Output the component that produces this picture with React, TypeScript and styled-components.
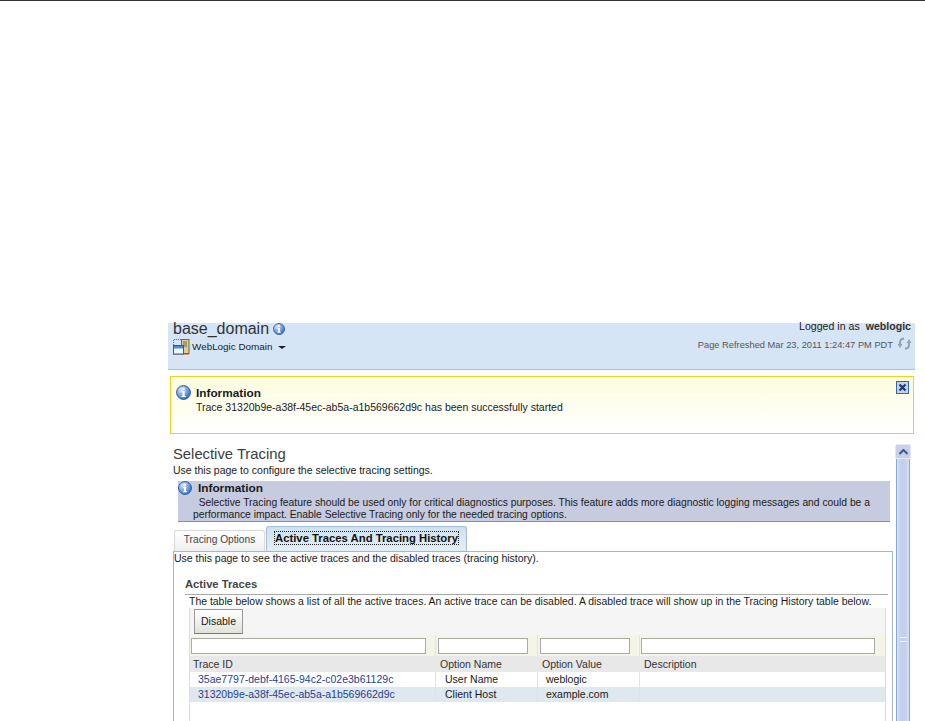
import React, { FC } from "react";
import styled, { createGlobalStyle } from "styled-components";

const COLUMNS = "246px 102px 102px 245px";

interface iRow {
  id: string;
  name: string;
  value: string;
  alt?: boolean;
}

const rows: iRow[] = [
  { id: "35ae7797-debf-4165-94c2-c02e3b61129c", name: "User Name", value: "weblogic" },
  { id: "31320b9e-a38f-45ec-ab5a-a1b569662d9c", name: "Client Host", value: "example.com", alt: true },
];

const InfoIcon: FC<{ size: number }> = ({ size }) => (
  <svg width={size} height={size} viewBox="0 0 16 16">
    <defs>
      <radialGradient id="infoFill" cx="35%" cy="30%" r="80%">
        <stop offset="0%" stopColor="#dbe9fb" />
        <stop offset="55%" stopColor="#6f9fe0" />
        <stop offset="100%" stopColor="#2b5fb5" />
      </radialGradient>
    </defs>
    <circle cx="8" cy="8" r="7.4" fill="url(#infoFill)" stroke="#2a55a0" />
    <rect x="6.8" y="3" width="2.4" height="2.2" fill="#fff" />
    <path d="M6 6.5h3.2v5.2H10.4v1.2H5.8v-1.2h1.1V7.7H6z" fill="#fff" />
  </svg>
);

const DomainIcon = () => (
  <svg width="17" height="16" viewBox="0 0 17 16">
    <path d="M0.5 6V0.5H9" fill="none" stroke="#d9462a" strokeDasharray="1 1" />
    <path d="M0.5 15.5H15.5" fill="none" stroke="#d9462a" strokeDasharray="1 1" />
    <rect x="8.5" y="0.5" width="7.5" height="14" fill="#d9cf94" stroke="#6f6a3c" />
    <path d="M10 3h4M10 5h4M10 7h4" stroke="#6f6a3c" />
    <rect x="0.5" y="6.5" width="10" height="8.5" fill="#f3f7fd" stroke="#2a5c9e" />
    <rect x="1" y="7" width="9" height="2.5" fill="#4f8ad0" />
  </svg>
);

const RefreshIcon = () => (
  <svg width="13" height="13" viewBox="0 0 13 13" fill="none" stroke="#8f9bab" strokeWidth="1.8">
    <path d="M6 1.5C3.4 1.5 2 3.4 2 5.6V8" />
    <path d="M7 11.5c2.6 0 4-1.9 4-4.1V5" />
    <path d="M0.2 7l1.8 3 1.8-3M9.2 6l1.8-3 1.8 3" strokeWidth="1.1" />
  </svg>
);

const CloseIcon = () => (
  <svg width="13" height="13" viewBox="0 0 13 13">
    <rect x="0.5" y="0.5" width="12" height="12" fill="#c3d3ec" stroke="#3a64a8" />
    <path d="M3.5 3.5l6 6M9.5 3.5l-6 6" stroke="#1c3a72" strokeWidth="2.2" />
  </svg>
);

const App = () => {
  return (
    <Page>
      <GlobalStyle />
      <Frame>
        <Header>
          <HeaderLeft>
            <DomainTitle>
              base_domain
              <InfoIcon size={12} />
            </DomainTitle>
            <DomainMenu>
              <DomainIcon />
              <DomainLabel>WebLogic Domain</DomainLabel>
              <Caret />
            </DomainMenu>
          </HeaderLeft>
          <HeaderRight>
            <LoggedIn>
              Logged in as <b>weblogic</b>
            </LoggedIn>
            <Refreshed>
              Page Refreshed Mar 23, 2011 1:24:47 PM PDT
              <RefreshIcon />
            </Refreshed>
          </HeaderRight>
        </Header>

        <Banner>
          <InfoIcon size={15} />
          <BannerText>
            <BannerTitle>Information</BannerTitle>
            <div>Trace 31320b9e-a38f-45ec-ab5a-a1b569662d9c has been successfully started</div>
          </BannerText>
          <CloseButton>
            <CloseIcon />
          </CloseButton>
        </Banner>

        <Body>
          <Main>
            <PageTitle>Selective Tracing</PageTitle>
            <Intro>Use this page to configure the selective tracing settings.</Intro>
            <Notice>
              <NoticeHead>
                <InfoIcon size={14} />
                <BannerTitle>Information</BannerTitle>
              </NoticeHead>
              <NoticeText>
                &nbsp;&nbsp;Selective Tracing feature should be used only for critical diagnostics purposes. This feature adds more diagnostic logging messages and could be a
                <br />
                performance impact. Enable Selective Tracing only for the needed tracing options.
              </NoticeText>
            </Notice>

            <Tabs>
              <Tab>Tracing Options</Tab>
              <Tab $active>
                <TabLabel>Active Traces And Tracing History</TabLabel>
              </Tab>
            </Tabs>

            <Panel>
              <PanelIntro>Use this page to see the active traces and the disabled traces (tracing history).</PanelIntro>
              <Section>
                <SectionTitle>Active Traces</SectionTitle>
                <SectionIntro>
                  The table below shows a list of all the active traces. An active trace can be disabled. A disabled trace will show up in the Tracing History table below.
                </SectionIntro>
                <TableBox>
                  <Toolbar>
                    <DisableButton>Disable</DisableButton>
                  </Toolbar>
                  <FilterRow>
                    <FilterCell><FilterInput /></FilterCell>
                    <FilterCell><FilterInput /></FilterCell>
                    <FilterCell><FilterInput /></FilterCell>
                    <FilterCell><FilterInput /></FilterCell>
                  </FilterRow>
                  <HeadRow>
                    <HeadCell>Trace ID</HeadCell>
                    <HeadCell>Option Name</HeadCell>
                    <HeadCell>Option Value</HeadCell>
                    <HeadCell>Description</HeadCell>
                  </HeadRow>
                  {rows.map((row) => (
                    <DataRow key={row.id} $alt={row.alt}>
                      <TraceCell>{row.id}</TraceCell>
                      <DataCell>{row.name}</DataCell>
                      <DataCell>{row.value}</DataCell>
                      <DataCell />
                    </DataRow>
                  ))}
                </TableBox>
              </Section>
            </Panel>
          </Main>

          <Scrollbar>
            <ScrollButton>
              <svg width="9" height="6" viewBox="0 0 9 6">
                <path d="M0.5 5L4.5 1l4 4" fill="none" stroke="#3f5a8a" strokeWidth="2" />
              </svg>
            </ScrollButton>
            <ScrollThumb>
              <Grip />
            </ScrollThumb>
          </Scrollbar>
        </Body>
      </Frame>
    </Page>
  );
};

export default App;

const GlobalStyle = createGlobalStyle`
  body {
    margin: 0;
    background: #fff;
    font-family: "Liberation Sans", Arial, sans-serif;
    font-size: 10.5px;
    color: #1a1a1a;
  }
`;

const Page = styled.div`
  height: 721px;
  overflow: hidden;
  border-top: 1px solid #333;
  box-sizing: border-box;
  padding: 322px 10px 0 168px;
`;

const Frame = styled.div`
  display: flex;
  flex-direction: column;
`;

const Header = styled.div`
  height: 47px;
  box-sizing: border-box;
  background: #d6e5f6;
  border-bottom: 1px solid #a9c0dc;
  display: flex;
  justify-content: space-between;
  padding: 0 4px 0 5px;
`;

const HeaderLeft = styled.div`
  display: flex;
  flex-direction: column;
`;

const DomainTitle = styled.div`
  display: flex;
  align-items: center;
  gap: 4px;
  font-size: 16px;
  line-height: 12px;
  color: #333;
  height: 12px;
`;

const DomainMenu = styled.div`
  display: flex;
  align-items: center;
  gap: 2px;
  margin-top: 4px;
  font-size: 9.9px;
`;

const DomainLabel = styled.span`
  margin-bottom: 2px;
`;

const Caret = styled.span`
  margin: 1px 0 0 3px;
  border-left: 4px solid transparent;
  border-right: 4px solid transparent;
  border-top: 3px solid #222;
`;

const HeaderRight = styled.div`
  display: flex;
  flex-direction: column;
  align-items: flex-end;
`;

const LoggedIn = styled.div`
  height: 7px;
  line-height: 7px;
  font-size: 10.6px;

  b {
    margin-left: 3px;
    color: #333;
  }
`;

const Refreshed = styled.div`
  display: flex;
  align-items: center;
  gap: 5px;
  margin-top: 10px;
  font-size: 9.3px;
  color: #555;

  svg {
    margin-top: -3px;
  }
`;

const Banner = styled.div`
  margin: 6px 1px 0 2px;
  height: 58px;
  box-sizing: border-box;
  border: 1px solid #f0d020;
  background: linear-gradient(#fdfddf, #fff);
  display: flex;
  padding: 8px 4px 0 5px;
  gap: 5px;
`;

const BannerText = styled.div`
  flex: 1;
  line-height: 14px;
  margin-top: 1px;
  font-size: 10.5px;
`;

const BannerTitle = styled.div`
  font-weight: 700;
  font-size: 11.8px;
`;

const CloseButton = styled.span`
  display: flex;
  align-items: flex-start;
  margin-top: -4px;
`;

const Body = styled.div`
  display: flex;
  margin-top: 10px;
`;

const Main = styled.div`
  width: 725px;
  margin-top: 1px;
  padding-left: 5px;
  box-sizing: border-box;
`;

const PageTitle = styled.div`
  font-size: 14.8px;
  line-height: 16px;
  margin-top: 1px;
  color: #3c3c3c;
`;

const Intro = styled.div`
  line-height: 14px;
  margin-top: 1px;
`;

const Notice = styled.div`
  margin: 4px 3px 0 5px;
  height: 41px;
  box-sizing: border-box;
  background: #c6cbdf;
  border-bottom: 1px solid #7d90ab;
`;

const NoticeHead = styled.div`
  display: flex;
  align-items: center;
  gap: 6px;
  height: 14px;
`;

const NoticeText = styled.div`
  font-size: 10.3px;
  line-height: 12px;
  padding-left: 15px;
  margin-top: 2px;
`;

const Tabs = styled.div`
  display: flex;
  align-items: flex-end;
  height: 29px;
  margin-left: 1px;
  gap: 1px;
`;

const Tab = styled.div<{ $active?: boolean }>`
  box-sizing: border-box;
  display: flex;
  align-items: center;
  justify-content: center;
  height: ${(p) => (p.$active ? "25px" : "21px")};
  width: ${(p) => (p.$active ? "201px" : "91px")};
  padding-bottom: ${(p) => (p.$active ? "2px" : "3px")};
  border: 1px solid ${(p) => (p.$active ? "#a3bdd6" : "#d8d8d8")};
  border-bottom: 0;
  border-radius: 3px 3px 0 0;
  background: ${(p) => (p.$active ? "linear-gradient(#cfe1f0, #e3eef6)" : "linear-gradient(#fff, #efefef)")};
  color: ${(p) => (p.$active ? "#111" : "#444")};
  font-size: 10.2px;
  font-weight: ${(p) => (p.$active ? 700 : 400)};
`;

const TabLabel = styled.span`
  font-size: 11.3px;
  border: 1px dotted #222;
  line-height: 12px;
`;

const Panel = styled.div`
  border: 1px solid #a3b6cc;
  border-bottom: 0;
  height: 172px;
  box-sizing: border-box;
`;

const PanelIntro = styled.div`
  line-height: 13px;
`;

const Section = styled.div`
  padding: 12px 4px 0 11px;
`;

const SectionTitle = styled.div`
  font-weight: 700;
  font-size: 11.2px;
  line-height: 15px;
  padding-bottom: 2px;
  color: #444;
  border-bottom: 1px solid #aaa;
`;

const SectionIntro = styled.div`
  font-size: 10.45px;
  line-height: 13px;
  margin-left: 4px;
  white-space: nowrap;
`;

const TableBox = styled.div`
  margin-left: 4px;
  width: 697px;
  height: 200px;
  border-left: 1px solid #ddd;
  border-right: 1px solid #ddd;
  box-sizing: border-box;
`;

const Toolbar = styled.div`
  height: 27px;
  background: #f5f5f5;
  padding: 1px 4px 0;
  box-sizing: border-box;
`;

const DisableButton = styled.div`
  width: 49px;
  height: 25px;
  box-sizing: border-box;
  display: flex;
  align-items: center;
  justify-content: center;
  padding-bottom: 2px;
  border: 1px solid #999;
  border-bottom-color: #777;
  background: linear-gradient(#fff, #e2e2da);
`;

const Grid = styled.div`
  display: grid;
  grid-template-columns: ${COLUMNS};
`;

const FilterRow = styled(Grid)`
  height: 21px;
  background: #f4f5e6;
`;

const FilterCell = styled.div`
  padding: 3px 9px 2px 2px;
  border-right: 1px solid #e4e4e4;
  box-sizing: border-box;
  min-width: 0;
  &:first-child {
    padding-left: 1px;
  }
  &:nth-child(4) {
    padding-left: 1px;
    padding-right: 10px;
    border-right: 0;
  }
`;

const FilterInput = styled.div`
  height: 16px;
  box-sizing: border-box;
  border: 1px solid #aaa;
  background: #fff;
`;

const HeadRow = styled(Grid)`
  height: 16px;
  background: #e8e8e8;
`;

const HeadCell = styled.div`
  padding-left: 4px;
  line-height: 16px;
  color: #333;
  &:first-child {
    padding-left: 3px;
  }
`;

const DataRow = styled(Grid)<{ $alt?: boolean }>`
  height: 15px;
  background: ${(p) => (p.$alt ? "#dfe8ee" : "#fff")};
`;

const DataCell = styled.div`
  padding-left: 8px;
  line-height: 15px;
  white-space: nowrap;
  overflow: hidden;
  border-right: 1px solid #e2e2e2;
  &:nth-child(2) {
    padding-left: 9px;
  }
  &:last-child {
    border-right: 0;
  }
`;

const TraceCell = styled(DataCell)`
  color: #1f3f8f;
`;

const Scrollbar = styled.div`
  width: 16px;
  margin-left: 2px;
  display: flex;
  flex-direction: column;
`;

const ScrollButton = styled.div`
  height: 15px;
  box-sizing: border-box;
  display: flex;
  align-items: center;
  justify-content: center;
  background: #c5d1ea;
  border: 1px solid #e3eaf6;
  border-radius: 2px;
`;

const ScrollThumb = styled.div`
  margin: 0 1px;
  flex: 1;
  min-height: 263px;
  box-sizing: border-box;
  border-left: 1px solid #8ea6d6;
  border-right: 1px solid #8ea6d6;
  background: linear-gradient(90deg, #d6dff4, #c2d0ee 35%, #c2d0ee 65%, #d6dff4);
  display: flex;
  justify-content: center;
  padding-top: 178px;
`;

const Grip = styled.div`
  width: 7px;
  height: 5px;
  border-top: 1px solid #eef2fa;
  border-bottom: 1px solid #eef2fa;
  box-sizing: border-box;
`;
